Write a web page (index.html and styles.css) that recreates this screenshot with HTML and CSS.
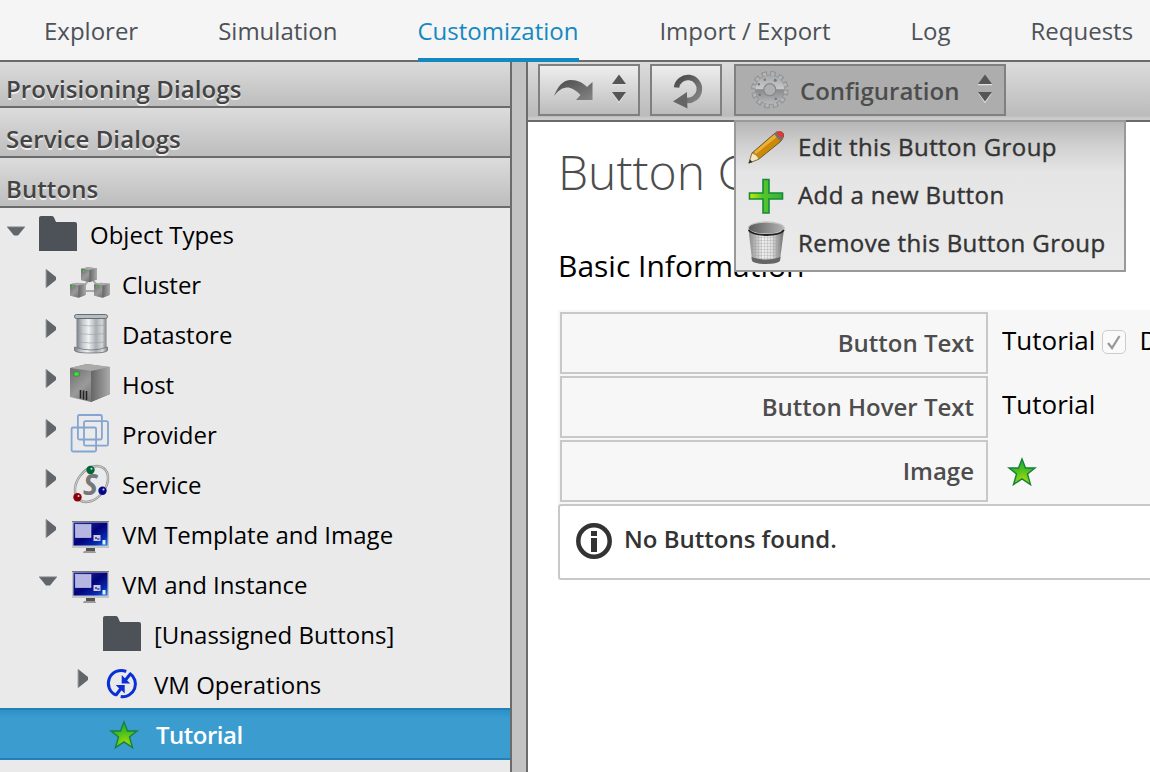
FILE: index.html
```html
<!DOCTYPE html>
<html lang="en">
<head>
<meta charset="utf-8">
<title>Automate Customization</title>
<link rel="stylesheet" href="styles.css">
</head>
<body>
<svg class="defs" width="0" height="0" aria-hidden="true">
  <defs>
    <linearGradient id="steel" x1="0" x2="1"><stop offset="0" stop-color="#777e84"/><stop offset=".2" stop-color="#c2c7cb"/><stop offset=".4" stop-color="#f0f2f3"/><stop offset=".65" stop-color="#a9afb4"/><stop offset=".85" stop-color="#d5d8da"/><stop offset="1" stop-color="#7b8186"/></linearGradient>
    <linearGradient id="front" x1="0" y1="0" x2="1" y2="1"><stop offset="0" stop-color="#666"/><stop offset=".45" stop-color="#9a9a9a"/><stop offset="1" stop-color="#555"/></linearGradient>
    <linearGradient id="side" x1="0" x2="1"><stop offset="0" stop-color="#666"/><stop offset="1" stop-color="#aaa"/></linearGradient>
    <linearGradient id="screen" x1="0" y1="0" x2="1" y2="1"><stop offset="0" stop-color="#26309c"/><stop offset=".5" stop-color="#03037a"/><stop offset=".8" stop-color="#082bb0"/><stop offset="1" stop-color="#1b85f0"/></linearGradient>
    <radialGradient id="leaf" cx=".55" cy=".85" r=".8"><stop offset="0" stop-color="#a5dc08"/><stop offset=".6" stop-color="#45bd22"/><stop offset="1" stop-color="#2caf35"/></radialGradient>
    <linearGradient id="dark" x1="0" y1="0" x2="1" y2="1"><stop offset="0" stop-color="#4a4a4a"/><stop offset="1" stop-color="#858585"/></linearGradient>
    <linearGradient id="gear" x1="0" y1="0" x2="0" y2="1"><stop offset="0" stop-color="#a5a8aa"/><stop offset=".47" stop-color="#c8c9ca"/><stop offset=".5" stop-color="#898c8e"/><stop offset="1" stop-color="#b7b8b9"/></linearGradient>
    <linearGradient id="cross" x1="0" x2="1"><stop offset="0" stop-color="#c9ea00"/><stop offset=".4" stop-color="#56c728"/><stop offset="1" stop-color="#38b13a"/></linearGradient>
    <linearGradient id="bin" x1="0" x2="1"><stop offset="0" stop-color="#888"/><stop offset=".4" stop-color="#eee"/><stop offset=".65" stop-color="#e2e2e2"/><stop offset="1" stop-color="#666"/></linearGradient>
    <linearGradient id="rim" x1="0" x2="1"><stop offset="0" stop-color="#5a5a5a"/><stop offset="1" stop-color="#b5b5b5"/></linearGradient>
    <pattern id="mesh" width="3" height="3" patternUnits="userSpaceOnUse"><path d="M0 0H3M0 0V3" stroke="#999" stroke-width=".6"/></pattern>
    <symbol id="i-down" viewBox="0 0 32 50"><path d="M7 17h18l-7 8.500h-4z" fill="#62666a"/><path d="M7 16.700h18" stroke="#a5a7a9"/></symbol>
    <symbol id="i-right" viewBox="0 0 32 50"><path d="M14 9l10 8v3l-10 8z" fill="#62666a"/><path d="M14 9.500v18" stroke="#a5a7a9"/></symbol>
    <symbol id="i-folder" viewBox="0 0 46 50"><path d="M3 41V8q0-2 2-2h11q1.500 0 2 1.500l2 4.500h19q2 0 2 2v27z" fill="#4d5258"/></symbol>
    <symbol id="i-cube" viewBox="0 0 40 38"><path d="M0 4L17 0l23 3v27L21 38 0 33z" fill="url(#front)"/><path d="M0 4L17 0l23 3-18 4z" fill="#aaa"/><path d="M21 7l19-4v27l-19 8z" fill="url(#side)"/><path d="M4 8h5v4H4z" fill="#3fe63f" stroke="#287a28" stroke-width=".6"/></symbol>
    <symbol id="i-cluster" viewBox="0 0 46 50"><path d="M15 31h16M17 25l5-7M29 25l-6-7" stroke="#aaa" stroke-width="2"/><use href="#i-cube" x="13" y="7" width="16" height="15.500"/><use href="#i-cube" x="2" y="22.500" width="16" height="15.500"/><use href="#i-cube" x="26" y="22.500" width="16" height="15.500"/></symbol>
    <symbol id="i-store" viewBox="0 0 46 50"><path d="M8.500 7h30v33q-15 4-30 0z" fill="url(#steel)"/><path d="M9 15q14 2 29 0M9 23.500q14 2 29 0M9 32q14 2 29 0" fill="none" stroke="#9a9fa4" stroke-width=".6"/><rect x="6.500" y="4.500" width="33" height="4" rx="2" fill="#b8bdc2" stroke="#666d74"/><path d="M6.500 37v3.500q1 2.500 16.500 2.500t16.500-2.500V37q-8 3-16.500 3T6.500 37z" fill="url(#steel)" stroke="#6b7177" stroke-width=".8"/></symbol>
    <symbol id="i-host" viewBox="0 0 46 50"><use href="#i-cube" x="2" y="4" width="40" height="38"/><path d="M12.500 30v8.500M15.500 30.500v9M18.500 31v9" stroke="#222" stroke-width="1.600"/></symbol>
    <symbol id="i-provider" viewBox="0 0 46 50"><g fill="none" stroke="#84a5d2" stroke-width="1.800"><rect x="9.900" y="5" width="24" height="24.500" rx="1.500"/><rect x="16" y="11.200" width="24" height="24.500" rx="1.500"/><rect x="3.600" y="17.500" width="24.500" height="24" rx="1.500"/></g></symbol>
    <symbol id="i-service" viewBox="0 0 46 50"><ellipse cx="23.500" cy="24" rx="14" ry="20" transform="rotate(38 23.500 24)" fill="none" stroke="#909090" stroke-width="2.400"/><ellipse cx="23.500" cy="24" rx="14" ry="20" transform="rotate(38 23.500 24)" fill="none" stroke="#ddd" stroke-width=".8"/><text x="15" y="34.500" class="glyph">S</text><circle cx="22.500" cy="10" r="4.200" fill="#00663a"/><circle cx="9.500" cy="37.300" r="4.200" fill="#8e0008"/><circle cx="34.500" cy="30.800" r="4.200" fill="#08088c"/><g fill="#dde"><circle cx="23.500" cy="8.800" r="1"/><circle cx="10.500" cy="36" r="1"/><circle cx="35.500" cy="29.500" r="1"/></g></symbol>
    <symbol id="i-vm" viewBox="0 0 46 50"><rect x="4" y="11" width="37" height="27" fill="#c5c6c8"/><path d="M4 11h37v1H4z" fill="#777"/><rect x="5.500" y="12.500" width="34" height="23" fill="url(#screen)"/><rect x="7.500" y="14.500" width="15.500" height="13" fill="#b5b6e2" stroke="#d4d4ee" stroke-width=".6"/><rect x="25.500" y="25" width="7" height="6" fill="#c8caf0"/><path d="M27 27h2v2h-2z" fill="#c0392b"/><path d="M29 28h2.500v2H29z" fill="#4778c7"/><path d="M34.500 30h3v4.500h-3z" fill="#e3f0ff"/><path d="M18 38h9v3h-9z" fill="#555"/><path d="M16 41h11l1 2H15z" fill="#999"/></symbol>
    <symbol id="i-ops" viewBox="0 0 46 50"><g transform="translate(.7 0)"><g fill="none" stroke="#0a2fd6" stroke-width="3"><path d="M25.500 11.500A12.700 12.700 0 0 0 15.500 35.200"/><path d="M28.800 13.300A12.700 12.700 0 0 1 20 36.600"/><path d="M30 13.500L24 21M15 35.500l6-8"/></g><path d="M21 15v8.500h8.500l-3-3-2.500-2.500zM24 33.500V25h-9l3 3 3 2.500z" fill="#0a2fd6"/></g></symbol>
    <symbol id="i-star" viewBox="0 0 30 30"><path d="M15 2l3.500 9h9.500l-7.500 6 3 10.500L15 21.800 6.500 27.500l3-10.500L2 11h9.500z" fill="url(#leaf)" stroke="#16803c" stroke-width="1.400"/></symbol>
    <symbol id="i-sort" viewBox="0 0 16 30"><path d="M0 11.500h14M1 20l6 9 6-9" stroke="#e0e0e0" stroke-width="1.500" fill="none"/><path d="M0 11L7 1.500l7 9.500zM0 19h14l-7 9.500z" fill="#565656"/></symbol>
  </defs>
</svg>

<nav class="tabs">
  <a class="tab">Explorer</a>
  <a class="tab">Simulation</a>
  <a class="tab active">Customization</a>
  <a class="tab">Import / Export</a>
  <a class="tab">Log</a>
  <a class="tab">Requests</a>
</nav>

<div class="workspace">
  <aside class="sidebar">
    <h3 class="fold">Provisioning Dialogs</h3>
    <h3 class="fold">Service Dialogs</h3>
    <h3 class="fold">Buttons</h3>
    <div class="tree">
      <div class="row"><svg class="arrow"><use href="#i-down"/></svg><svg class="icon"><use href="#i-folder"/></svg><span>Object Types</span></div>
      <div class="row l1"><svg class="arrow"><use href="#i-right"/></svg><svg class="icon"><use href="#i-cluster"/></svg><span>Cluster</span></div>
      <div class="row l1"><svg class="arrow"><use href="#i-right"/></svg><svg class="icon"><use href="#i-store"/></svg><span>Datastore</span></div>
      <div class="row l1"><svg class="arrow"><use href="#i-right"/></svg><svg class="icon"><use href="#i-host"/></svg><span>Host</span></div>
      <div class="row l1"><svg class="arrow"><use href="#i-right"/></svg><svg class="icon"><use href="#i-provider"/></svg><span>Provider</span></div>
      <div class="row l1"><svg class="arrow"><use href="#i-right"/></svg><svg class="icon"><use href="#i-service"/></svg><span>Service</span></div>
      <div class="row l1"><svg class="arrow"><use href="#i-right"/></svg><svg class="icon"><use href="#i-vm"/></svg><span>VM Template and Image</span></div>
      <div class="row l1"><svg class="arrow"><use href="#i-down"/></svg><svg class="icon"><use href="#i-vm"/></svg><span>VM and Instance</span></div>
      <div class="row l2"><svg class="arrow"></svg><svg class="icon"><use href="#i-folder"/></svg><span>[Unassigned Buttons]</span></div>
      <div class="row l2"><svg class="arrow"><use href="#i-right"/></svg><svg class="icon"><use href="#i-ops"/></svg><span>VM Operations</span></div>
      <div class="row selected"><svg class="star"><use href="#i-star"/></svg><span>Tutorial</span></div>
    </div>
  </aside>
  <div class="splitter"></div>
  <main class="content">
    <div class="toolbar">
      <button class="tool history">
        <svg width="40" height="24" viewBox="0 0 40 24"><path d="M0 18C4 8 9 2 17 2c7 0 12 3 16 7l5.500-5v18H22l4.500-5C22 12 17 9.500 13 9.500 8 9.500 4 13 0 18z" fill="url(#dark)"/></svg>
        <svg width="16" height="30"><use href="#i-sort"/></svg>
      </button>
      <button class="tool reload">
        <svg width="32" height="38" viewBox="0 0 32 38"><path d="M5.500 16.500A11.500 11.500 0 1 1 15 29.300" fill="none" stroke="url(#dark)" stroke-width="5.500"/><path d="M2 30.500L16 21v5.500l.5 11z" fill="#666"/></svg>
      </button>
      <div class="config">
        <button class="tool open">
          <svg width="40" height="40" viewBox="0 0 40 40"><g transform="translate(.8 -.3)"><circle cx="20" cy="20" r="16" fill="none" stroke="#8f9193" stroke-width="5.500" stroke-dasharray="5.200 3.178"/><circle cx="20" cy="20" r="15" fill="#8f9193"/><circle cx="20" cy="20" r="16" fill="none" stroke="#b3b5b6" stroke-width="3.500" stroke-dasharray="3.200 5.178" stroke-dashoffset="-1"/><circle cx="20" cy="20" r="14.300" fill="url(#gear)"/><circle cx="20" cy="20" r="6" fill="#b0b0b0" stroke="#87898b" stroke-width="1.300"/><g fill="#777"><circle cx="15" cy="10" r="1.200"/><circle cx="25.500" cy="10.500" r="1.500"/><circle cx="9" cy="14.500" r="1.200"/><circle cx="10" cy="25" r="1.200"/><circle cx="26" cy="29" r="1.200"/></g></g></svg>
          <span>Configuration</span>
          <svg width="16" height="30"><use href="#i-sort"/></svg>
        </button>
        <div class="menu">
          <div class="item"><svg class="micon" viewBox="0 0 40 48"><path d="M3 40l3-10L28 11q6-4 9-1 2 4-3 9L13 36z" fill="#cc8906" stroke="#6b5738"/><path d="M8 29L29 11l3 2L10 31z" fill="#eab037"/><path d="M3 40l3-10q5 1 7 6z" fill="#f6e7bc" stroke="#7a6c49" stroke-width=".7"/><path d="M2.500 40.500l1.500-4 2.500 2.500z" fill="#333"/><path d="M28 11l6 7 3-3-6-7z" fill="#7a6a72"/><path d="M30 9q5-2 7 1 1 3-1 5z" fill="#ee3430"/></svg><span>Edit this Button Group</span></div>
          <div class="item"><svg class="micon" viewBox="0 0 40 48"><path d="M17 8.500h6V22h13.500v6H23v14h-6V28H3.500v-6H17z" fill="url(#cross)" stroke="#138a3c" stroke-width="1.600"/></svg><span>Add a new Button</span></div>
          <div class="item"><svg class="micon" viewBox="0 0 40 48"><path d="M2.500 10L6 41q2 4 14 4t14-4l4-31z" fill="url(#bin)"/><path d="M4 16l2.500 24q13 5 27 0L37 16z" fill="url(#mesh)"/><path d="M5.500 38q14 5 29 0l-.5 4q-3 3-14 3T6 42z" fill="#666"/><ellipse cx="20.300" cy="9" rx="18" ry="6" fill="url(#rim)" stroke="#c5c5c5" stroke-width="1.300"/><path d="M2.500 11q4 5 18 5t17.500-5" fill="none" stroke="#222" stroke-width="1.800"/></svg><span>Remove this Button Group</span></div>
        </div>
      </div>
    </div>
    <div class="page">
      <h1>Button Group</h1>
      <h2>Basic Information</h2>
      <div class="form">
        <div class="label">Button Text</div>
        <div class="value">Tutorial<span class="check"><svg width="16" height="16" viewBox="0 0 16 16"><path d="M2 9l4 5 7.500-12" fill="none" stroke="#999" stroke-width="2.300"/></svg></span>D</div>
        <div class="label">Button Hover Text</div>
        <div class="value">Tutorial</div>
        <div class="label">Image</div>
        <div class="value"><svg class="vstar"><use href="#i-star"/></svg></div>
      </div>
      <div class="notice">
        <svg width="36" height="36" viewBox="0 0 36 36"><circle cx="18" cy="18" r="15.700" fill="none" stroke="#333" stroke-width="4.500"/><path d="M15 8h6v5h-6zM15 15h6v14h-6z" fill="#333"/></svg>
        <span>No Buttons found.</span>
      </div>
    </div>
  </main>
</div>
</body>
</html>
```
FILE: styles.css
```css
* { box-sizing: border-box; }
body {
  margin: 0;
  height: 772px;
  overflow: hidden;
  font: 24px/50px "Open Sans", sans-serif;
  color: #000;
  background: #fff;
}
.defs { display: block; }
h1, h2, h3 { margin: 0; font-weight: 400; }
svg { flex: none; }

.tabs {
  display: flex;
  gap: 80px;
  height: 62px;
  padding-left: 44px;
  background: #f5f5f5;
  border-bottom: 2px solid #6b6b6b;
  color: #4d5258;
  line-height: 62px;
}
.tab { height: 62px; flex: none; white-space: nowrap; }
.tab.active {
  padding-right: 1px;
  color: #1488c0;
  border-bottom: 4px solid #1488c0;
}

.workspace { display: flex; height: 710px; }
.sidebar { width: 510px; flex: none; background: #eaeaea; }
.fold {
  height: 50px;
  padding: 6px 6px 0;
  border-bottom: 2px solid #6b6b6b;
  background: linear-gradient(#dcdcdc, #bdbdbd);
  font-size: 24px;
  font-weight: 600;
  line-height: 50px;
  letter-spacing: .1px;
  color: #444;
  text-shadow: 0 2px 0 #eee;
}
.fold:first-child { height: 46px; padding-top: 2px; }
.tree { padding-top: 2px; }
.row { display: flex; height: 50px; white-space: nowrap; }
.l1 { padding-left: 32px; }
.l2 { padding-left: 64px; }
.arrow { width: 32px; height: 50px; margin-right: 4px; }
.icon { width: 46px; height: 50px; margin-right: 8px; }
.glyph { font: italic 700 28px "Open Sans", sans-serif; fill: #777; }
.selected {
  height: 52px;
  margin-top: -2px;
  padding: 2px 0 0 109px;
  align-items: center;
  border: solid #2380ba;
  border-width: 2px 0;
  background: linear-gradient(#2d91c7, #3a9ccf 8px);
  color: #fff;
  font-weight: 600;
  letter-spacing: -.5px;
}
.star { width: 30px; height: 30px; margin-right: 17px; }

.splitter {
  width: 18px;
  flex: none;
  background: #c3c3c3;
  border: solid #6b6b6b;
  border-width: 0 2px;
}
.content { flex: 1; min-width: 0; }
.toolbar {
  display: flex;
  height: 60px;
  padding: 2px 0 0 10px;
  background: linear-gradient(#dcdcdc, #bbb 54px, #ccc 56px);
  border-bottom: 2px solid #6b6b6b;
}
.tool {
  display: flex;
  align-items: center;
  height: 52px;
  padding: 0;
  border: 2px solid #808080;
  background: linear-gradient(#eee, #bcbcbc);
  font: inherit;
}
.history { width: 102px; padding-left: 14px; gap: 18px; margin-right: 10px; }
.history svg:last-child { margin-top: -4px; }
.reload { width: 72px; padding-left: 19px; margin-right: 12px; }
.config { position: relative; }
.open {
  width: 272px;
  padding-left: 13px;
  background: #adadad;
  font-weight: 600;
  color: #4d4d4d;
}
.open span { width: 159px; margin: 1px 19px 0 11px; text-align: left; white-space: nowrap; }
.open svg:last-child { margin-top: -4px; }
.menu {
  position: absolute;
  left: 0;
  top: 56px;
  width: 392px;
  height: 152px;
  padding-top: 1px;
  border: 2px solid #999;
  background: linear-gradient(#b6b6b6, #cfcfcf 22px, #e5e5e5 50px, #ebebeb);
  color: #333;
}
.item {
  display: flex;
  height: 48px;
  padding-left: 10px;
  line-height: 47px;
  letter-spacing: .42px;
  -webkit-text-stroke: .4px #333;
  white-space: nowrap;
}
.micon { width: 40px; height: 48px; margin-right: 12px; -webkit-text-stroke: 0; }

.page { padding-left: 30px; }
h1 {
  padding-top: 14px;
  font-size: 48px;
  font-weight: 300;
  line-height: 72px;
  color: #4d4d4d;
}
h2 { padding-top: 36px; height: 102px; font-size: 30px; line-height: 44px; }
.form {
  display: grid;
  grid-template-columns: 428px 1fr;
  grid-auto-rows: 62px;
  gap: 2px 14px;
  padding: 2px;
  height: 194px;
  background: #f7f7f7;
}
.label {
  padding-right: 12px;
  border: 2px solid #c8c8c8;
  text-align: right;
  font-weight: 600;
  line-height: 58px;
  color: #4d4d4d;
}
.value {
  display: flex;
  margin-right: -2px;
  overflow: hidden;
  white-space: nowrap;
  font-size: 26px;
  line-height: 56px;
}
.check {
  display: flex;
  align-items: center;
  justify-content: center;
  flex: none;
  width: 24px;
  height: 24px;
  margin: 18px 13px 0 7px;
  border: 1px solid #ccc;
  border-radius: 5px;
  background: #fafafa;
}
.vstar { width: 30px; height: 30px; margin: 17px 0 0 5px; }
.notice {
  display: flex;
  align-items: center;
  height: 76px;
  padding: 0 0 2px 16px;
  border: 2px solid #c8c8c8;
  border-right: 0;
  border-radius: 3px 0 0 3px;
  font-weight: 600;
  color: #333;
}
.notice span { margin: -4px 0 0 12px; }
```
